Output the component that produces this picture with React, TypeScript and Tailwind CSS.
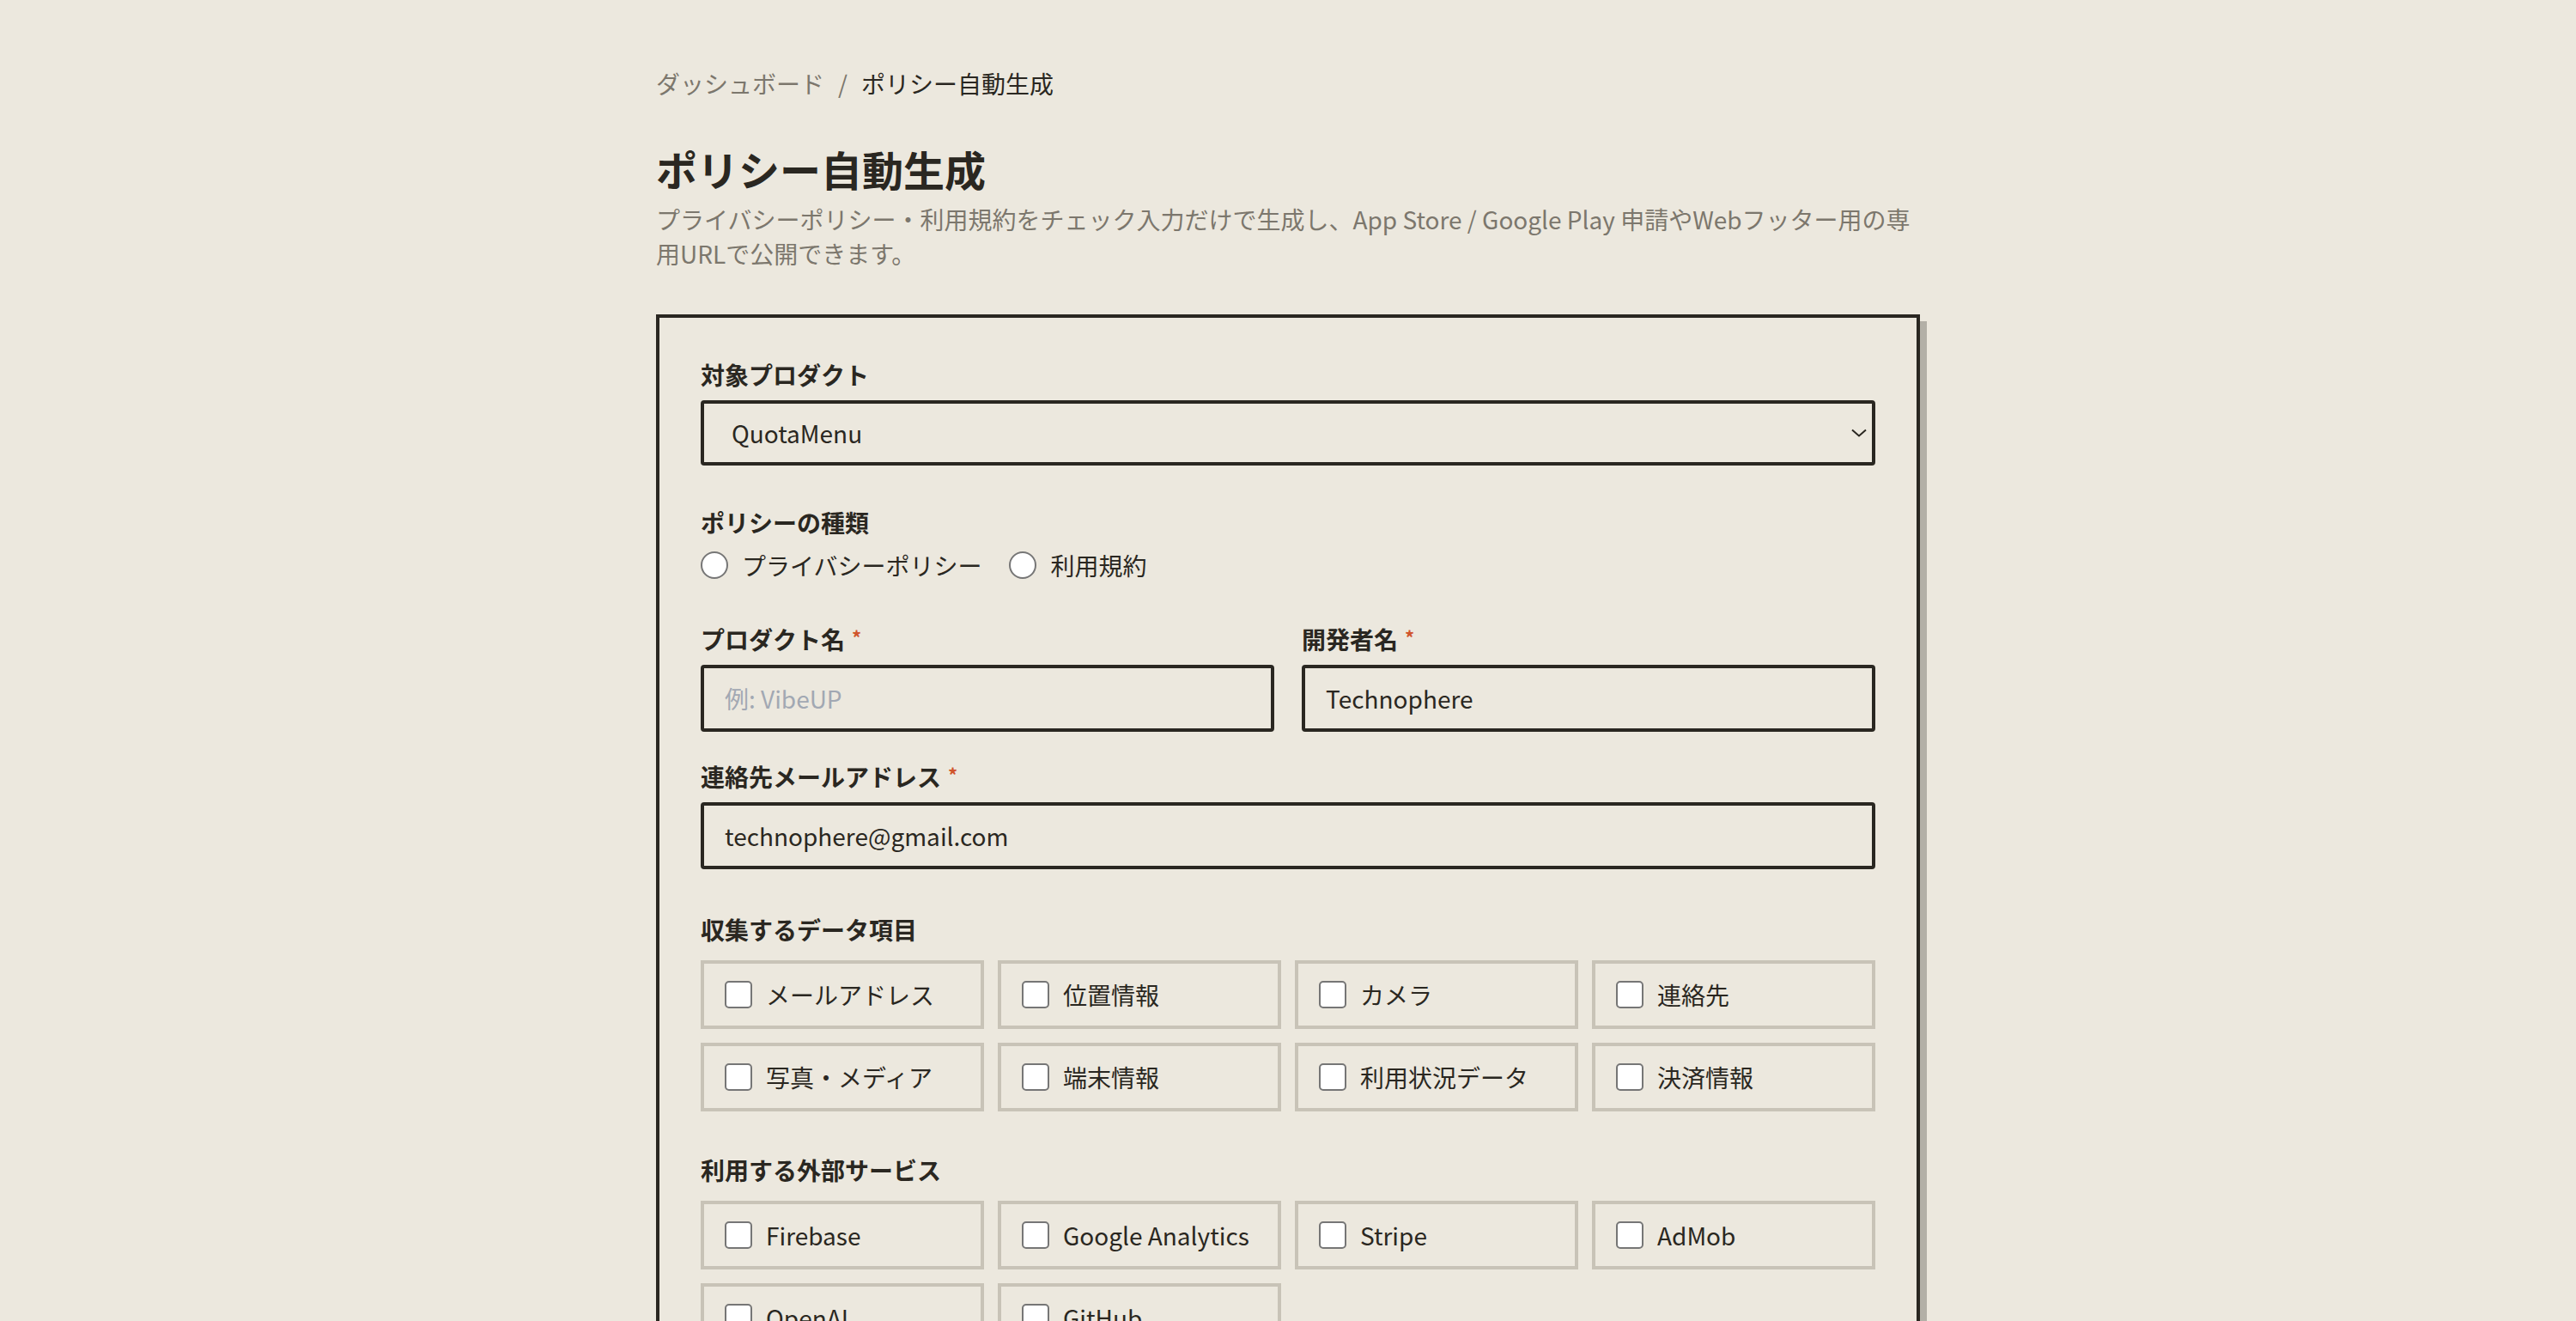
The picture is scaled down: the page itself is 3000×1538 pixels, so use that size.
import { useState } from 'react'

const DATA_ITEMS = ['メールアドレス', '位置情報', 'カメラ', '連絡先', '写真・メディア', '端末情報', '利用状況データ', '決済情報']
const SERVICES = ['Firebase', 'Google Analytics', 'Stripe', 'AdMob', 'OpenAI', 'GitHub']

function Label({ children, required }: { children: React.ReactNode; required?: boolean }) {
  return (
    <label className="mb-3 flex items-start text-[28px] leading-[36px] font-bold text-[#2a2721]">
      {children}
      {required && <span className="ml-2 text-[22px] leading-[30px] text-[#d0552c]">*</span>}
    </label>
  )
}

function CheckTile({ label, checked, onToggle }: { label: string; checked: boolean; onToggle: () => void }) {
  return (
    <label className="flex h-[80px] cursor-pointer items-center gap-4 border-4 border-[#c8c3b7] px-6 text-[28px] leading-[40px] text-[#2a2721]">
      <input
        type="checkbox"
        checked={checked}
        onChange={onToggle}
        className="h-8 w-8 shrink-0 appearance-none rounded-[5px] border-2 border-[#767676] bg-white checked:bg-[#2a2721]"
      />
      <span>{label}</span>
    </label>
  )
}

export default function App() {
  const [policy, setPolicy] = useState<string | null>(null)
  const [productName, setProductName] = useState('')
  const [developer, setDeveloper] = useState('Technophere')
  const [email, setEmail] = useState('technophere@gmail.com')
  const [items, setItems] = useState<string[]>([])
  const [services, setServices] = useState<string[]>([])

  function toggle(list: string[], set: (v: string[]) => void, value: string) {
    set(list.includes(value) ? list.filter((v) => v !== value) : [...list, value])
  }

  const inputClass =
    'h-[78px] w-full rounded-[4px] border-4 border-[#2a2721] bg-transparent px-6 text-[28px] text-[#2a2721] outline-none placeholder:text-[#a2a8b3]'

  return (
    <div
      className="min-h-screen bg-[#ece8de] text-[#2a2721]"
      style={{ fontFamily: '"Noto Sans CJK JP", "Noto Sans", sans-serif' }}
    >
      <div className="mx-auto w-[1472px] pt-[77px] pb-20">
        <nav className="flex items-center gap-4 text-[28px] leading-[40px]">
          <span className="text-[#7c776d]">ダッシュボード</span>
          <span className="text-[#7c776d]">/</span>
          <span className="text-[#2a2721]">ポリシー自動生成</span>
        </nav>

        <h1 className="mt-[47px] text-[48px] leading-[64px] font-bold">ポリシー自動生成</h1>
        <p className="mt-[7px] text-[28px] leading-[40px] text-[#7c776d]">
          プライバシーポリシー・利用規約をチェック入力だけで生成し、App Store / Google Play 申請やWebフッター用の専用URLで公開できます。
        </p>

        <div className="mt-[51px] border-4 border-[#2a2721] bg-[#ece8de] p-12 shadow-[8px_8px_0_0_#b3b0a7]">
          <div>
            <Label>対象プロダクト</Label>
            <div className="relative">
              <select className="h-[76px] w-full appearance-none rounded-[4px] border-4 border-[#2a2721] bg-transparent px-8 text-[28px] text-[#2a2721] outline-none">
                <option>QuotaMenu</option>
              </select>
              <svg
                className="pointer-events-none absolute top-1/2 right-[10px] h-4 w-[18px] -translate-y-1/2"
                viewBox="0 0 18 10"
                fill="none"
                stroke="#2a2721"
                strokeWidth="2"
              >
                <path d="M1 1.5 9 8.5 17 1.5" />
              </svg>
            </div>
          </div>

          <div className="mt-12">
            <div className="text-[28px] leading-[36px] font-bold">ポリシーの種類</div>
            <div className="mt-3 flex h-[40px] items-center gap-8 text-[28px] leading-[40px]">
              {['プライバシーポリシー', '利用規約'].map((p) => (
                <label key={p} className="flex cursor-pointer items-center gap-4">
                  <input
                    type="radio"
                    name="policy"
                    checked={policy === p}
                    onChange={() => setPolicy(p)}
                    className="h-8 w-8 appearance-none rounded-full border-2 border-[#767676] bg-white checked:border-[10px] checked:border-[#2a2721]"
                  />
                  <span>{p}</span>
                </label>
              ))}
            </div>
          </div>

          <div className="mt-12 grid grid-cols-2 gap-8">
            <div>
              <Label required>プロダクト名</Label>
              <input
                value={productName}
                onChange={(e) => setProductName(e.target.value)}
                placeholder="例: VibeUP"
                className={inputClass}
              />
            </div>
            <div>
              <Label required>開発者名</Label>
              <input value={developer} onChange={(e) => setDeveloper(e.target.value)} className={inputClass} />
            </div>
          </div>

          <div className="mt-[34px]">
            <Label required>連絡先メールアドレス</Label>
            <input value={email} onChange={(e) => setEmail(e.target.value)} className={inputClass} />
          </div>

          <div className="mt-[50px]">
            <div className="mb-4 text-[28px] leading-[40px] font-bold">収集するデータ項目</div>
            <div className="grid grid-cols-4 gap-4">
              {DATA_ITEMS.map((item) => (
                <CheckTile key={item} label={item} checked={items.includes(item)} onToggle={() => toggle(items, setItems, item)} />
              ))}
            </div>
          </div>

          <div className="mt-12">
            <div className="mb-4 text-[28px] leading-[40px] font-bold">利用する外部サービス</div>
            <div className="grid grid-cols-4 gap-4">
              {SERVICES.map((s) => (
                <CheckTile key={s} label={s} checked={services.includes(s)} onToggle={() => toggle(services, setServices, s)} />
              ))}
            </div>
          </div>
        </div>
      </div>
    </div>
  )
}
